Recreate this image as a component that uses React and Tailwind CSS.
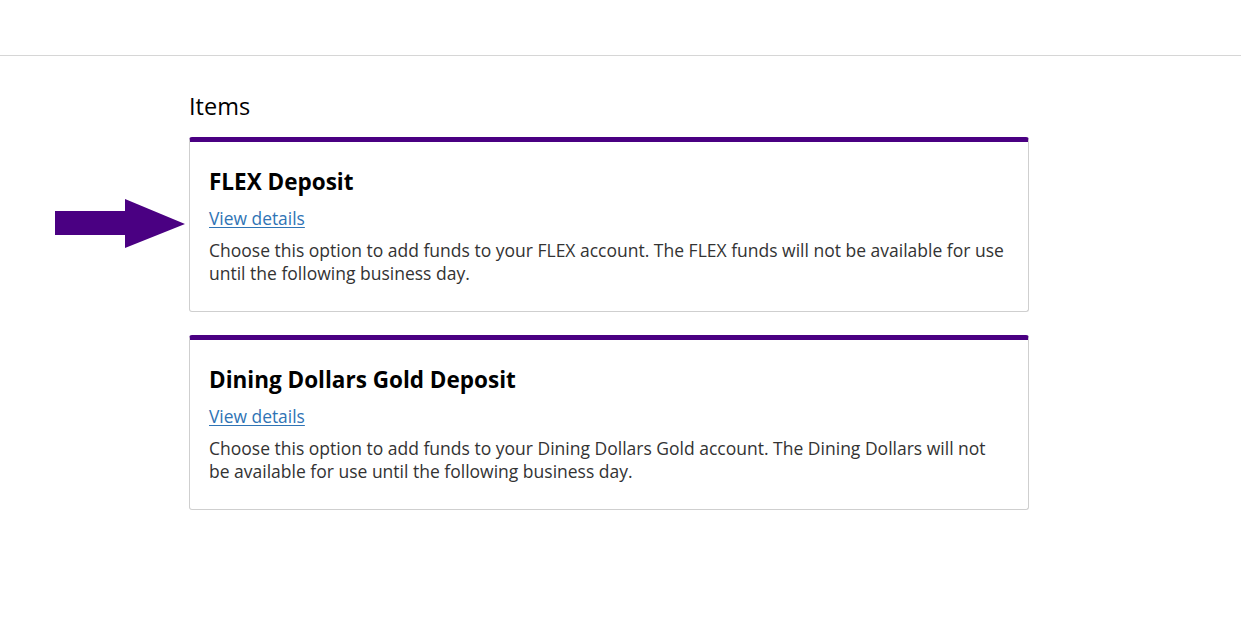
import React from 'react';

const items = [
  {
    title: 'FLEX Deposit',
    text: 'Choose this option to add funds to your FLEX account. The FLEX funds will not be available for use until the following business day.',
    arrow: true,
  },
  {
    title: 'Dining Dollars Gold Deposit',
    text: 'Choose this option to add funds to your Dining Dollars Gold account. The Dining Dollars will not be available for use until the following business day.',
  },
];

const Arrow = () => (
  <svg width="132" height="50" viewBox="0 0 132 50" className="absolute left-[-135px] top-[57px]">
    <polygon points="0,12 0,36 70,36 70,49 130,25 70,0 70,12" fill="#4a0082" />
  </svg>
);

const ItemCard = ({ title, text, arrow }) => (
  <div className="relative border border-[#cfcfcf] border-t-[5px] border-t-[#4a0082] rounded-[3px] pt-[26px] pb-[26px] px-[19px]">
    {arrow && <Arrow />}
    <h3 className="text-[22.5px] leading-[28px] font-bold text-black">{title}</h3>
    <a href="#" className="block mt-[10px] text-[17.4px] leading-[24px] text-[#2f74b5] underline underline-offset-2">
      View details
    </a>
    <p className="mt-[9px] text-[17.5px] leading-[23px] text-[#333333]">{text}</p>
  </div>
);

export default function App() {
  return (
    <div className="min-h-screen bg-white" style={{ fontFamily: '"Open Sans", sans-serif' }}>
      <div className="h-[56px] border-b border-[#d6d6d6]" />
      <div className="ml-[189px] w-[840px] pt-[35px]">
        <h2 className="text-[23.5px] leading-[30px] text-black mb-[16px]">Items</h2>
        <div className="flex flex-col gap-[23px]">
          {items.map((it) => (
            <ItemCard key={it.title} {...it} />
          ))}
        </div>
      </div>
    </div>
  );
}
